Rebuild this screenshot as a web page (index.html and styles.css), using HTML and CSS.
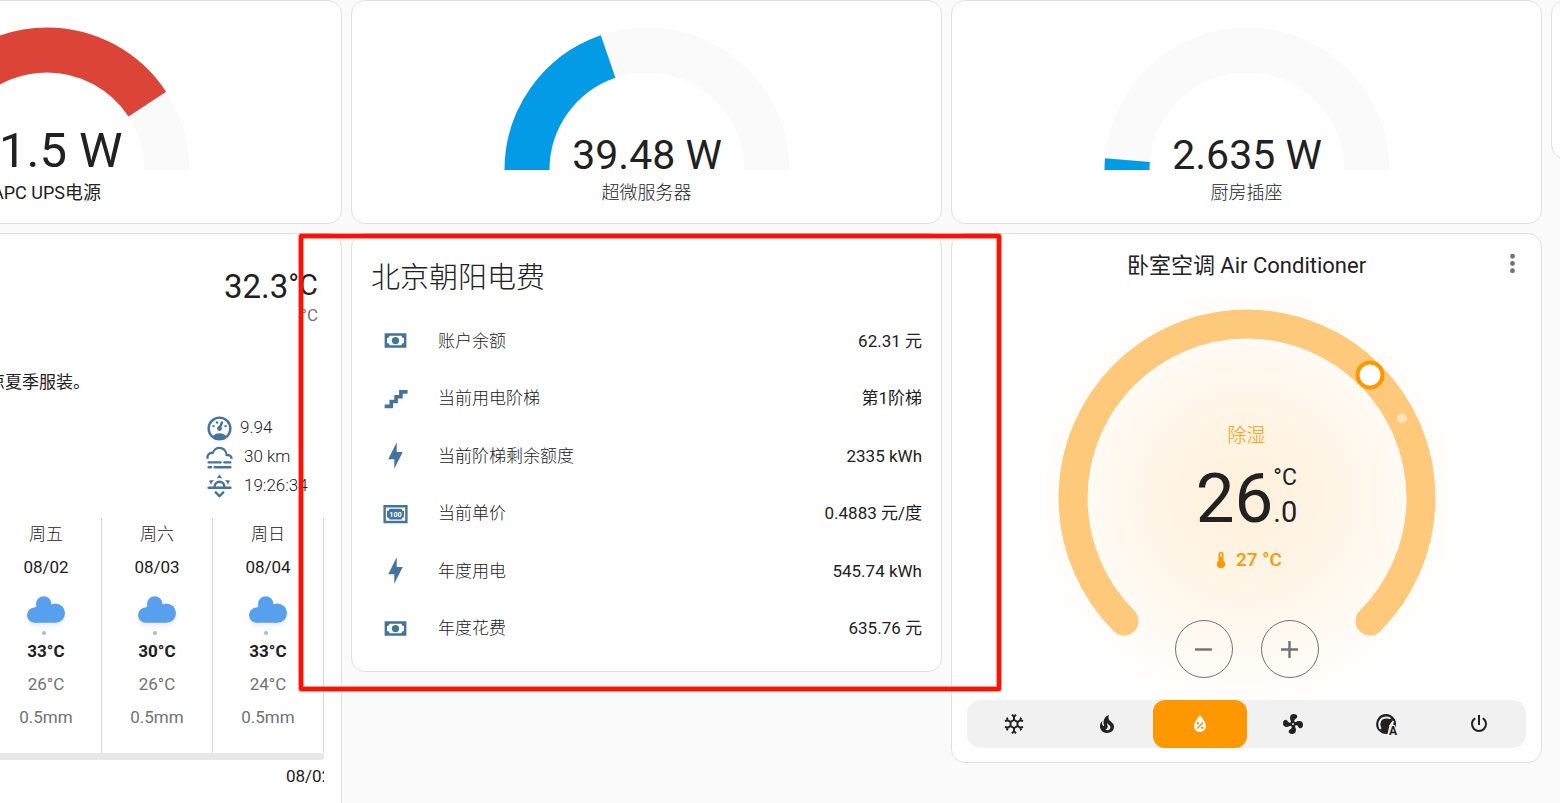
FILE: index.html
```html
<!DOCTYPE html>
<html lang="zh-CN">
<head>
<meta charset="utf-8">
<meta name="viewport" content="width=device-width, initial-scale=1">
<title>概览</title>
<link rel="stylesheet" href="styles.css">
</head>
<body>
<svg class="sprite" aria-hidden="true">
  <defs>
    <symbol id="i-cash" viewBox="0 0 24 24"><path d="M3,6H21V18H3V6M12,9A3,3 0 0,1 15,12A3,3 0 0,1 12,15A3,3 0 0,1 9,12A3,3 0 0,1 12,9M7,8A2,2 0 0,1 5,10V14A2,2 0 0,1 7,16H17A2,2 0 0,1 19,14V10A2,2 0 0,1 17,8H7Z"/></symbol>
    <symbol id="i-stairs" viewBox="0 0 24 24"><path d="M15,5V9H11V13H7V17H3V20H10V16H14V12H18V8H22V5H15Z"/></symbol>
    <symbol id="i-bolt" viewBox="0 0 24 24"><path d="M11 15H6L13 1V9H18L11 23V15Z"/></symbol>
    <symbol id="i-gauge" viewBox="0 0 24 24"><path d="M17.3,18C19,16.5 20,14.4 20,12A8,8 0 0,0 12,4A8,8 0 0,0 4,12C4,14.4 5,16.5 6.7,18C8.2,16.7 10,16 12,16C14,16 15.9,16.7 17.3,18M12,2A10,10 0 0,1 22,12A10,10 0 0,1 12,22A10,10 0 0,1 2,12A10,10 0 0,1 12,2M7,9A1,1 0 0,1 8,10A1,1 0 0,1 7,11A1,1 0 0,1 6,10A1,1 0 0,1 7,9M10,6A1,1 0 0,1 11,7A1,1 0 0,1 10,8A1,1 0 0,1 9,7A1,1 0 0,1 10,6M17,9A1,1 0 0,1 18,10A1,1 0 0,1 17,11A1,1 0 0,1 16,10A1,1 0 0,1 17,9M14.4,6.1C14.9,6.3 15.1,6.9 15,7.4L13.6,10.8C13.8,11.1 14,11.5 14,12A2,2 0 0,1 12,14A2,2 0 0,1 10,12C10,11 10.7,10.1 11.7,10L13.1,6.7C13.3,6.1 13.9,5.9 14.4,6.1Z"/></symbol>
    <symbol id="i-fog" viewBox="0 0 24 24"><path d="M3,15H13A1,1 0 0,1 14,16A1,1 0 0,1 13,17H3A1,1 0 0,1 2,16A1,1 0 0,1 3,15M16,15H21A1,1 0 0,1 22,16A1,1 0 0,1 21,17H16A1,1 0 0,1 15,16A1,1 0 0,1 16,15M1,12A5,5 0 0,1 6,7C7,4.65 9.3,3 12,3C15.43,3 18.24,5.66 18.5,9.03L19,9C21.19,9 22.97,10.76 23,13H21A2,2 0 0,0 19,11H17V10A5,5 0 0,0 12,5C9.5,5 7.45,6.82 7.06,9.19C6.73,9.07 6.37,9 6,9A3,3 0 0,0 3,12C3,12.35 3.06,12.69 3.17,13H1.1L1,12M3,19H5A1,1 0 0,1 6,20A1,1 0 0,1 5,21H3A1,1 0 0,1 2,20A1,1 0 0,1 3,19M8,19H21A1,1 0 0,1 22,20A1,1 0 0,1 21,21H8A1,1 0 0,1 7,20A1,1 0 0,1 8,19Z"/></symbol>
    <symbol id="i-sunset" viewBox="0 0 24 24"><path d="M3,12H7A5,5 0 0,1 12,7A5,5 0 0,1 17,12H21A1,1 0 0,1 22,13A1,1 0 0,1 21,14H3A1,1 0 0,1 2,13A1,1 0 0,1 3,12M15,12A3,3 0 0,0 12,9A3,3 0 0,0 9,12H15M12,2L14.39,5.42C13.65,5.15 12.84,5 12,5C11.16,5 10.35,5.15 9.61,5.42L12,2M3.34,7L7.5,6.65C6.9,7.16 6.36,7.78 5.94,8.5C5.5,9.24 5.25,10 5.11,10.79L3.34,7M20.65,7L18.88,10.79C18.74,10 18.47,9.23 18.05,8.5C17.63,7.78 17.1,7.15 16.5,6.64L20.65,7M12.71,20.71L15.82,17.6C16.21,17.21 16.21,16.57 15.82,16.18C15.43,15.79 14.8,15.79 14.41,16.18L12,18.59L9.59,16.18C9.2,15.79 8.57,15.79 8.18,16.18C7.79,16.57 7.79,17.21 8.18,17.6L11.29,20.71C11.5,20.9 11.74,21 12,21C12.26,21 12.5,20.9 12.71,20.71Z"/></symbol>
    <symbol id="i-snow" viewBox="0 0 24 24"><path d="M20.79,13.95L18.46,14.57L16.46,13.44V10.56L18.46,9.43L20.79,10.05L21.31,8.12L19.54,7.65L20,5.88L18.07,5.36L17.45,7.69L15.45,8.82L13,7.38V5.12L14.71,3.41L13.29,2L12,3.29L10.71,2L9.29,3.41L11,5.12V7.38L8.5,8.82L6.5,7.69L5.92,5.36L4,5.88L4.47,7.65L2.7,8.12L3.22,10.05L5.55,9.43L7.55,10.56V13.45L5.55,14.58L3.22,13.96L2.7,15.89L4.47,16.36L4,18.12L5.93,18.64L6.55,16.31L8.55,15.18L11,16.62V18.88L9.29,20.59L10.71,22L12,20.71L13.29,22L14.7,20.59L13,18.88V16.62L15.5,15.17L17.5,16.3L18.12,18.63L20,18.12L19.53,16.35L21.3,15.88L20.79,13.95M9.5,10.56L12,9.11L14.5,10.56V13.44L12,14.89L9.5,13.44V10.56Z"/></symbol>
    <symbol id="i-fire" viewBox="0 0 24 24"><path d="M17.66 11.2C17.43 10.9 17.15 10.64 16.89 10.38C16.22 9.78 15.46 9.35 14.82 8.72C13.33 7.26 13 4.85 13.95 3C13 3.23 12.17 3.75 11.46 4.32C8.87 6.4 7.85 10.07 9.07 13.22C9.11 13.32 9.15 13.42 9.15 13.55C9.15 13.77 9 13.97 8.8 14.05C8.57 14.15 8.33 14.09 8.14 13.93C8.08 13.88 8.04 13.83 8 13.76C6.87 12.33 6.69 10.28 7.45 8.64C5.78 10 4.87 12.3 5 14.47C5.06 14.97 5.12 15.47 5.29 15.97C5.43 16.57 5.7 17.17 6 17.7C7.08 19.43 8.95 20.67 10.96 20.92C13.1 21.19 15.39 20.8 17.03 19.32C18.86 17.66 19.5 15 18.56 12.72L18.43 12.46C18.22 12 17.66 11.2 17.66 11.2M14.5 17.5C14.22 17.74 13.76 18 13.4 18.1C12.28 18.5 11.16 17.94 10.5 17.28C11.69 17 12.4 16.12 12.61 15.23C12.78 14.43 12.46 13.77 12.33 13C12.21 12.26 12.23 11.63 12.5 10.94C12.69 11.32 12.89 11.7 13.13 12C13.9 13 15.11 13.44 15.37 14.8C15.41 14.94 15.43 15.08 15.43 15.23C15.46 16.05 15.1 16.95 14.5 17.5Z"/></symbol>
    <symbol id="i-dry" viewBox="0 0 24 24"><path d="M12,3.25C12,3.25 6,10 6,14C6,17.32 8.69,20 12,20A6,6 0 0,0 18,14C18,10 12,3.25 12,3.25M14.47,9.97L15.53,11.03L9.53,17.03L8.47,15.97M9.75,10A1.25,1.25 0 0,1 11,11.25A1.25,1.25 0 0,1 9.75,12.5A1.25,1.25 0 0,1 8.5,11.25A1.25,1.25 0 0,1 9.75,10M14.25,14.5A1.25,1.25 0 0,1 15.5,15.75A1.25,1.25 0 0,1 14.25,17A1.25,1.25 0 0,1 13,15.75A1.25,1.25 0 0,1 14.25,14.5Z"/></symbol>
    <symbol id="i-fan" viewBox="0 0 24 24"><path d="M12,11A1,1 0 0,0 11,12A1,1 0 0,0 12,13A1,1 0 0,0 13,12A1,1 0 0,0 12,11M12.5,2C17,2 17.11,5.57 14.75,6.75C13.76,7.24 13.32,8.29 13.13,9.22C13.61,9.42 14.03,9.73 14.35,10.13C18.05,8.13 22.03,8.92 22.03,12.5C22.03,17 18.46,17.1 17.28,14.73C16.78,13.74 15.72,13.3 14.79,13.11C14.59,13.59 14.28,14 13.88,14.34C15.87,18.03 15.08,22 11.5,22C7,22 6.91,18.42 9.27,17.24C10.25,16.75 10.69,15.71 10.89,14.79C10.4,14.59 9.97,14.27 9.65,13.87C5.96,15.85 2,15.07 2,11.5C2,7 5.56,6.89 6.74,9.26C7.24,10.25 8.29,10.68 9.22,10.87C9.41,10.39 9.73,9.97 10.14,9.65C8.15,5.96 8.94,2 12.5,2Z"/></symbol>
    <symbol id="i-power" viewBox="0 0 24 24"><path d="M16.56,5.44L15.11,6.89C16.84,7.94 18,9.83 18,12A6,6 0 0,1 12,18A6,6 0 0,1 6,12C6,9.83 7.16,7.94 8.88,6.88L7.44,5.44C5.36,6.88 4,9.28 4,12A8,8 0 0,0 12,20A8,8 0 0,0 20,12C20,9.28 18.64,6.88 16.56,5.44M13,3H11V13H13"/></symbol>
    <symbol id="i-dots" viewBox="0 0 24 24"><path d="M12,16A2,2 0 0,1 14,18A2,2 0 0,1 12,20A2,2 0 0,1 10,18A2,2 0 0,1 12,16M12,10A2,2 0 0,1 14,12A2,2 0 0,1 12,14A2,2 0 0,1 10,12A2,2 0 0,1 12,10M12,4A2,2 0 0,1 14,6A2,2 0 0,1 12,8A2,2 0 0,1 10,6A2,2 0 0,1 12,4Z"/></symbol>
    <symbol id="i-thermo" viewBox="0 0 24 24"><path d="M15 13V5A3 3 0 0 0 9 5V13A5 5 0 1 0 15 13M12 4A1 1 0 0 1 13 5V8H11V5A1 1 0 0 1 12 4Z"/></symbol>
    <symbol id="i-minus" viewBox="0 0 24 24"><path d="M19,13H5V11H19V13Z"/></symbol>
    <symbol id="i-plus" viewBox="0 0 24 24"><path d="M19,13H13V19H11V13H5V11H11V5H13V11H19V13Z"/></symbol>
    <symbol id="i-rain" viewBox="0 0 60 42" overflow="visible">
      <g class="cloud">
        <circle cx="18.7" cy="27.1" r="7.7"/><circle cx="27.7" cy="15.9" r="7.7"/><circle cx="39.3" cy="25.1" r="9.7"/><path d="M18.7 19.4L24 16L32 20L39.3 18V34.8H18.7Z"/>
      </g>
      <circle class="drop" cx="28" cy="45" r="2"/>
    </symbol>
  </defs>
</svg>

<main class="board">
  <section class="column column--left">
    <div class="column__body">
      <article class="card gauge">
        <svg class="gauge__dial" viewBox="-150 -150 300 150">
          <path class="gauge__track" d="M-120 0A120 120 0 0 1 120 0"/>
          <path class="gauge__level gauge__level--high" pathLength="100" stroke-dasharray="81.5 200" d="M-120 0A120 120 0 0 1 120 0"/>
          <text class="gauge__value gauge__value--large" x="0" y="-3">81.5 W</text>
        </svg>
        <div class="gauge__name">APC UPS电源</div>
      </article>

      <article class="card weather">
        <div class="weather__now">
          <div class="weather__temp">32.3<span class="weather__unit">°C</span></div>
          <div class="weather__feels">°C</div>
        </div>
        <p class="weather__advice">清凉夏季服装。</p>
        <ul class="weather__facts">
          <li class="fact fact--near"><svg class="icon"><use href="#i-gauge"/></svg><span>9.94</span></li>
          <li class="fact"><svg class="icon"><use href="#i-fog"/></svg><span>30 km</span></li>
          <li class="fact"><svg class="icon"><use href="#i-sunset"/></svg><span>19:26:34</span></li>
        </ul>
        <div class="forecast">
          <div class="day"><span class="thin">周五</span><span>08/02</span><svg class="day__icon"><use href="#i-rain"/></svg><b>33°C</b><span class="muted">26°C</span><span class="muted">0.5mm</span></div>
          <div class="day"><span class="thin">周六</span><span>08/03</span><svg class="day__icon"><use href="#i-rain"/></svg><b>30°C</b><span class="muted">26°C</span><span class="muted">0.5mm</span></div>
          <div class="day"><span class="thin">周日</span><span>08/04</span><svg class="day__icon"><use href="#i-rain"/></svg><b>33°C</b><span class="muted">24°C</span><span class="muted">0.5mm</span></div>
        </div>
        <div class="scrollbar"></div>
        <div class="hourly"><span class="hourly__date">08/02</span></div>
      </article>
    </div>
  </section>

  <section class="column">
    <article class="card gauge">
      <svg class="gauge__dial" viewBox="-150 -150 300 150">
        <path class="gauge__track" d="M-120 0A120 120 0 0 1 120 0"/>
        <path class="gauge__level" pathLength="100" stroke-dasharray="39.48 200" d="M-120 0A120 120 0 0 1 120 0"/>
        <text class="gauge__value" x="0" y="-1">39.48 W</text>
      </svg>
      <div class="gauge__name thin">超微服务器</div>
    </article>

    <div class="marked">
      <article class="card entities">
        <h2 class="entities__title thin">北京朝阳电费</h2>
        <ul class="entities__list">
          <li class="entity"><span class="entity__icon"><svg class="icon"><use href="#i-cash"/></svg></span><span class="entity__name thin">账户余额</span><span>62.31 元</span></li>
          <li class="entity"><span class="entity__icon"><svg class="icon"><use href="#i-stairs"/></svg></span><span class="entity__name thin">当前用电阶梯</span><span>第1阶梯</span></li>
          <li class="entity"><span class="entity__icon"><svg class="icon"><use href="#i-bolt"/></svg></span><span class="entity__name thin">当前阶梯剩余额度</span><span>2335 kWh</span></li>
          <li class="entity"><span class="entity__icon"><svg class="icon" viewBox="0 0 24 24"><path d="M2,5H22V20H2V5M20,18V7H4V18H20M17,8A2,2 0 0,0 19,10V15A2,2 0 0,0 17,17H7A2,2 0 0,0 5,15V10A2,2 0 0,0 7,8H17Z"/><text class="note" x="12" y="15">100</text></svg></span><span class="entity__name thin">当前单价</span><span>0.4883 元/度</span></li>
          <li class="entity"><span class="entity__icon"><svg class="icon"><use href="#i-bolt"/></svg></span><span class="entity__name thin">年度用电</span><span>545.74 kWh</span></li>
          <li class="entity"><span class="entity__icon"><svg class="icon"><use href="#i-cash"/></svg></span><span class="entity__name thin">年度花费</span><span>635.76 元</span></li>
        </ul>
      </article>
      <div class="marked__frame"></div>
    </div>
  </section>

  <section class="column">
    <article class="card gauge">
      <svg class="gauge__dial" viewBox="-150 -150 300 150">
        <path class="gauge__track" d="M-120 0A120 120 0 0 1 120 0"/>
        <path class="gauge__level" pathLength="100" stroke-dasharray="2.635 200" d="M-120 0A120 120 0 0 1 120 0"/>
        <text class="gauge__value" x="0" y="-1">2.635 W</text>
      </svg>
      <div class="gauge__name thin">厨房插座</div>
    </article>

    <article class="card climate">
      <header class="climate__head">
        <h2 class="climate__title">卧室空调 Air Conditioner</h2>
        <button class="climate__menu" type="button" aria-label="更多信息"><svg class="icon"><use href="#i-dots"/></svg></button>
      </header>
      <div class="dial">
        <svg class="dial__ring" viewBox="-202 -202 404 404">
          <path class="dial__arc" d="M-123 123A174 174 0 1 1 123 123"/>
          <circle class="dial__current" cx="155" cy="-79.5" r="5"/>
          <circle class="dial__handle" cx="123" cy="-123" r="12.5"/>
        </svg>
        <div class="dial__info">
          <div class="dial__mode thin">除湿</div>
          <div class="dial__target"><span class="dial__int">26</span><span class="dial__aux"><span class="dial__unit">°C</span><span class="dial__dec">.0</span></span></div>
          <div class="dial__now"><svg class="dial__thermo"><use href="#i-thermo"/></svg>27 °C</div>
          <div class="dial__steps">
            <button class="step" type="button" aria-label="降低"><svg class="icon"><use href="#i-minus"/></svg></button>
            <button class="step" type="button" aria-label="升高"><svg class="icon"><use href="#i-plus"/></svg></button>
          </div>
        </div>
      </div>
      <div class="modes">
        <button class="mode" type="button" aria-label="制冷"><svg class="mode__icon"><use href="#i-snow"/></svg></button>
        <button class="mode" type="button" aria-label="制热"><svg class="mode__icon"><use href="#i-fire"/></svg></button>
        <button class="mode mode--active" type="button" aria-label="除湿"><svg class="mode__icon"><use href="#i-dry"/></svg></button>
        <button class="mode" type="button" aria-label="送风"><svg class="mode__icon"><use href="#i-fan"/></svg></button>
        <button class="mode" type="button" aria-label="自动"><svg class="mode__icon" viewBox="0 0 24 24"><path d="M12 2A10 10 0 1 0 13.5 21.9L15.5 13L19 9.5L20 16H21.2A10 10 0 0 0 12 2Z"/><path class="auto__gap" d="M6.600 17C3.800 12 5.500 6 12 5.600C14.500 5.500 16.200 6.400 17 7.400M19.500 9L16 14"/><path d="M8.300 10.500C9 8.500 11 7.600 13 8.200L18.200 5.800L16 11.500L13 17L8.500 16Z"/><text class="auto__letter" x="19" y="23">A</text></svg></button>
        <button class="mode" type="button" aria-label="关闭"><svg class="mode__icon"><use href="#i-power"/></svg></button>
      </div>
    </article>
  </section>

  <section class="column column--right">
    <div class="column__body"><article class="card card--short"></article></div>
  </section>
</main>
</body>
</html>
```
FILE: styles.css
```css
* { box-sizing: border-box; }

body {
  margin: 0;
  height: 100vh;
  overflow: hidden;
  background: #fafafa;
  color: #212121;
  font: 400 17px/24px Roboto, "Noto Sans CJK SC", sans-serif;
}

h2, p, ul { margin: 0; padding: 0; font-weight: 400; }
ul { list-style: none; }
button { padding: 0; border: 0; background: none; color: inherit; font: inherit; }
svg { display: block; fill: currentColor; }

.sprite { position: absolute; width: 0; height: 0; }
.icon { width: 29px; height: 29px; }
.muted { color: #727272; }
.thin { font-weight: 300; }

/* board */
.board {
  display: grid;
  grid-template-columns: minmax(0, 342fr) minmax(0, 591fr) minmax(0, 591fr) minmax(0, 9fr);
  gap: 9px;
  align-items: start;
}
.column { display: flex; flex-direction: column; gap: 9px; }
.column--left, .column--right { flex-direction: row; overflow: hidden; }
.column--left { justify-content: flex-end; }
.column__body { flex: 0 0 591px; display: flex; flex-direction: column; gap: 9px; }
.card { background: #fff; border: 1px solid #e0e0e0; border-radius: 14px; }
.card--short { min-height: 159px; }

/* gauge */
.gauge { display: flex; flex-direction: column; align-items: center; padding: 19px 0 16px; }
.gauge__dial { width: 300px; max-width: 100%; overflow: visible; }
.gauge__track, .gauge__level { fill: none; stroke: #fafafa; stroke-width: 45px; }
.gauge__level { stroke: #039be5; }
.gauge__level--high { stroke: #db4437; }
.gauge__value { font-size: 41px; text-anchor: middle; }
.gauge__value--large { font-size: 49px; }
.gauge__name { margin-top: 9px; font-size: 18px; line-height: 28px; }

/* weather */
.weather { padding: 32px 17px 48px; }
.weather__now { padding-right: 6px; text-align: right; }
.weather__temp { display: flex; justify-content: flex-end; align-items: flex-start; font-size: 33px; line-height: 42px; }
.weather__unit { font-size: 29px; line-height: 38px; }
.weather__feels { line-height: 14px; color: #727272; }
.weather__advice { margin-top: 48px; padding-right: 234px; text-align: right; }
.weather__facts { width: 119px; margin: 20px 0 0 auto; font-weight: 300; }
.fact { display: flex; gap: 10px; height: 29px; line-height: 26px; white-space: nowrap; }
.fact--near { gap: 6px; }
.fact .icon { flex: none; color: #44739e; }
.forecast { display: flex; justify-content: flex-end; margin-top: 17px; }
.day {
  flex: 0 0 111px;
  display: flex;
  flex-direction: column;
  align-items: center;
  padding: 4px 0 24px;
  border-right: 1px solid #d9d9d9;
  gap: 9px;
}
.day b { font-weight: 700; }
.day__icon { width: 60px; height: 42px; overflow: visible; }
.cloud { fill: #57a0ee; filter: drop-shadow(0 3px 2px rgba(0, 0, 0, .08)); }
.drop { fill: #91c0f8; }
.scrollbar { height: 7px; border-radius: 4px; background: #e8e8e8; }
.hourly { display: flex; justify-content: flex-end; padding-top: 4px; }
.hourly__date { width: 38px; overflow: hidden; white-space: nowrap; }

/* entities */
.marked { position: relative; }
.marked__frame {
  position: absolute;
  z-index: 2;
  inset: 1px -59px -19px -52px;
  border: 4px solid #ff1000;
  border-radius: 2px;
  box-shadow: 0 0 0 1px rgba(255, 16, 0, .4), inset 0 0 0 1px rgba(255, 16, 0, .4);
  pointer-events: none;
}
.entities { padding: 0 19px 14px; }
.entities__title { padding: 24px 0 14px; font-size: 29px; line-height: 40px; }
.entities__list { display: grid; grid-auto-rows: 1fr; min-height: 345px; }
.entity { display: flex; align-items: center; }
.entity__icon { display: flex; justify-content: center; width: 48px; margin-right: 19px; color: #44739e; }
.entity__name { flex: 1; }
.note { fill: #fff; font-size: 6px; font-weight: 700; text-anchor: middle; }

/* climate */
.climate { padding: 0 15px 14px; }
.climate__head { display: grid; grid-template-columns: 28px 1fr 28px; align-items: center; height: 62px; padding-top: 2px; }
.climate__title { grid-column: 2; font-size: 22px; line-height: 30px; text-align: center; }
.climate__menu { align-self: start; padding-top: 13px; color: #727272; }
.dial {
  display: grid;
  justify-content: center;
  grid-template-columns: minmax(0, 404px);
  background: radial-gradient(circle 215px, rgba(255, 152, 0, .15), rgba(255, 152, 0, .065) 60%, rgba(255, 152, 0, .02) 90%, transparent) center / 404px 404px no-repeat;
}
.dial__ring, .dial__info { grid-area: 1 / 1; }
.dial__arc { fill: none; stroke: #ffc97b; stroke-width: 29px; stroke-linecap: round; }
.dial__current { fill: #ffe2b8; }
.dial__handle { fill: #fff; stroke: #ff9800; stroke-width: 4px; }
.dial__info { display: flex; flex-direction: column; align-items: center; padding-top: 128px; }
.dial__mode { color: #ff9800; font-size: 19px; }
.dial__target { display: flex; margin-top: 16px; }
.dial__int { font-size: 69px; line-height: 69px; }
.dial__aux { display: flex; flex-direction: column; justify-content: space-between; padding: 2px 0 6px; }
.dial__unit { font-size: 23px; line-height: 24px; }
.dial__dec { font-size: 29px; line-height: 29px; }
.dial__now { display: flex; align-items: center; gap: 5px; margin-top: 15px; color: #ff9800; font-size: 19px; font-weight: 500; }
.dial__thermo { width: 20px; height: 20px; }
.dial__steps { display: flex; gap: 28px; margin-top: 48px; }
.step { display: flex; justify-content: center; align-items: center; width: 58px; height: 58px; border: 1px solid #727272; border-radius: 50%; color: #727272; }
.modes { display: flex; border-radius: 14px; background: #f1f1f1; }
.mode { flex: 1; display: flex; justify-content: center; align-items: center; height: 48px; border-radius: 12px; }
.mode--active { background: #ff9800; color: #fff; }
.mode__icon { width: 24px; height: 24px; }
.auto__gap { fill: none; stroke: #f1f1f1; stroke-width: 2px; }
.auto__letter { font-size: 12px; font-weight: 700; text-anchor: middle; stroke: #f1f1f1; stroke-width: 2px; paint-order: stroke; }
```
